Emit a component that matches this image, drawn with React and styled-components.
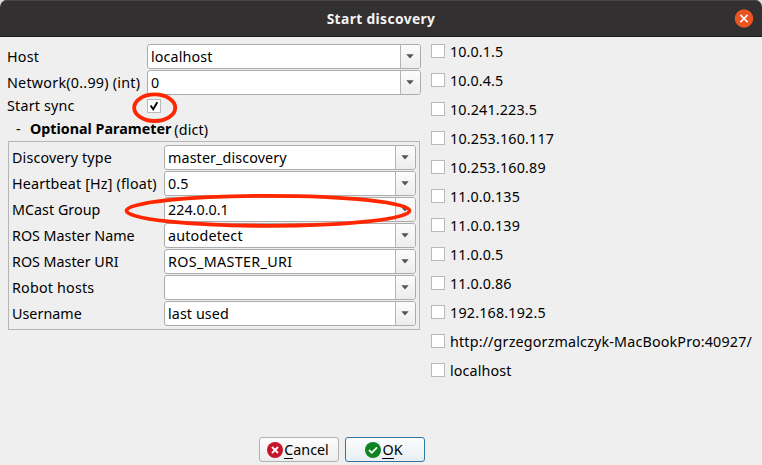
import React from "react";
import styled, { createGlobalStyle } from "styled-components";

const GlobalStyle = createGlobalStyle`
  *, *::before, *::after { box-sizing: border-box; }
  html, body { margin: 0; background: #dcdcdc; }
  body { overflow: hidden; }
`;

const Window = styled.div`
  position: relative;
  display: flex;
  flex-direction: column;
  width: 762px;
  height: 465px;
  overflow: hidden;
  border-radius: 7px 7px 0 0;
  background: #efefef;
  color: #000;
  font: 14.3px/20px "Noto Sans", sans-serif;
  white-space: nowrap;
`;

const TitleBar = styled.header`
  display: grid;
  grid-template-columns: 36px 1fr 36px;
  align-items: center;
  justify-items: center;
  flex: none;
  height: 37px;
  background: #323030;
  border-top: 1px solid #484646;
  border-bottom: 1px solid #1d1c1c;
`;

const Title = styled.h1`
  grid-column: 2;
  margin: 1px 0 0;
  color: #f5f4f2;
  font-size: 13.8px;
  font-weight: 700;
  letter-spacing: 0.38px;
`;

const CloseButton = styled.button`
  display: block;
  width: 20px;
  height: 20px;
  padding: 0;
  border: 0;
  background: none;
  svg { display: block; }
`;

const Body = styled.main`
  display: grid;
  grid-template-columns: 413px 1fr;
  column-gap: 10px;
  flex: 1;
  padding: 7px 0 0 8px;
`;

const Form = styled.section`
  display: flex;
  flex-direction: column;
`;

const Row = styled.div`
  display: grid;
  grid-template-columns: ${(p) => p.$label}px 1fr;
  align-items: center;
  height: ${(p) => p.$height || 25}px;
  margin-bottom: ${(p) => (p.$height ? 0 : 1)}px;
`;

const Text = styled.span`
  letter-spacing: ${(p) => p.$track || 0}px;
  font-weight: ${(p) => (p.$bold ? 700 : 400)};
`;

const Label = styled(Text)`
  margin-left: -1px;
`;

const Combo = styled.div`
  display: grid;
  grid-template-columns: 1fr 20px;
  height: 25px;
  border: 1px solid #acacac;
  border-radius: 3px;
  background: #fff;
  overflow: hidden;
`;

const Value = styled(Text)`
  padding-left: 3px;
  line-height: 24px;
`;

const Arrow = styled.span`
  display: grid;
  place-items: center;
  padding: 0 2px 1px 0;
  border-left: 1px solid #b4b4b4;
  background: linear-gradient(#fcfcfc, #ececec);
`;

const Box = styled.span`
  display: block;
  width: 14px;
  height: 14px;
  border: 1px solid #b9b9b9;
  background: #fff;
  svg { display: block; }
`;

const GroupTitle = styled.div`
  display: flex;
  align-items: center;
  height: 25px;
  padding-left: 8px;
`;

const Dash = styled.span`
  width: 14px;
`;

const TypeHint = styled(Text)`
  padding: 2px 0 0 3px;
`;

const Group = styled.div`
  height: 189px;
  width: 412px;
  padding: 3px;
  border: 1px solid #b5b5b5;
  ${Label} { margin-left: 0; }
`;

const HostList = styled.ul`
  margin: 0;
  padding: 0;
  list-style: none;
`;

const HostItem = styled.li`
  display: flex;
  gap: 5px;
  height: 29px;
  ${Text} { margin-top: -2px; }
`;

const Footer = styled.footer`
  display: flex;
  gap: 6px;
  height: 28px;
  padding-left: 259px;
`;

const PushButton = styled.button`
  display: flex;
  align-items: center;
  justify-content: center;
  gap: 1px;
  width: 80px;
  height: 25px;
  padding: 0 2px 0 0;
  border: 1px solid ${(p) => (p.$primary ? "#2f75a5" : "#b1b1b1")};
  border-radius: 3px;
  background: ${(p) => (p.$primary ? "linear-gradient(#fbfdfe, #e8eef2)" : "linear-gradient(#fdfdfd, #ededed)")};
  color: #000;
  font: inherit;
  u { text-decoration: none; display: inline-block; height: 19px; border-bottom: 1px solid #000; }
`;

const Highlights = styled.svg`
  position: absolute;
  inset: 0;
  pointer-events: none;
`;

const Caret = () => (
  <svg width="8" height="5" viewBox="0 0 8 5"><path d="M.3.3h7.4L4 4.5Z" fill="#555" /></svg>
);

const Field = ({ label, value, width, lt, vt }) => (
  <Row $label={width}>
    <Label $track={lt}>{label}</Label>
    <Combo>
      <Value $track={vt}>{value}</Value>
      <Arrow><Caret /></Arrow>
    </Combo>
  </Row>
);

const options = [
  ["Discovery type", "master_discovery", 0.15, 0.12],
  ["Heartbeat [Hz] (float)", "0.5", 0.17, 0.1],
  ["MCast Group", "224.0.0.1", 0.03, 0.03],
  ["ROS Master Name", "autodetect", 0, 0.2],
  ["ROS Master URI", "ROS_MASTER_URI", 0, 0.36],
  ["Robot hosts", "", 0.2, 0],
  ["Username", "last used", 0.03, 0.1],
];

const hosts = [
  ["10.0.1.5", 0.12],
  ["10.0.4.5", 0.12],
  ["10.241.223.5", 0.17],
  ["10.253.160.117", 0.2],
  ["10.253.160.89", 0.2],
  ["11.0.0.135", 0.12],
  ["11.0.0.139", 0.12],
  ["11.0.0.5", 0.12],
  ["11.0.0.86", 0.12],
  ["192.168.192.5", 0.2],
  ["http://grzegorzmalczyk-MacBookPro:40927/", 0.17],
  ["localhost", 0.12],
];

export default function App() {
  return (
    <>
      <GlobalStyle />
      <Window>
        <TitleBar>
          <Title>Start discovery</Title>
          <CloseButton aria-label="Close">
            <svg width="20" height="20" viewBox="0 0 20 20">
              <circle cx="10" cy="9.5" r="9.3" fill="#e95420" />
              <path d="m6.4 5.9 7.2 7.2m0-7.2-7.2 7.2" stroke="#fff" strokeWidth="1.5" />
            </svg>
          </CloseButton>
        </TitleBar>
        <Body>
          <Form>
            <Field width={139} label="Host" value="localhost" lt={0.2} vt={0.12} />
            <Field width={139} label="Network(0..99) (int)" value="0" lt={0.25} />
            <Row $label={139} $height={20}>
              <Label $track={0.2}>Start sync</Label>
              <Box>
                <svg width="12" height="12" viewBox="0 0 12 12">
                  <path d="m2.6 5.5 2.6 3.8L9.3 2.2" fill="none" stroke="#000" strokeWidth="1.9" />
                </svg>
              </Box>
            </Row>
            <GroupTitle>
              <Dash>-</Dash>
              <Text $bold>Optional Parameter</Text>
              <TypeHint $track={0.15}>(dict)</TypeHint>
            </GroupTitle>
            <Group>
              {options.map(([label, value, lt, vt]) => (
                <Field key={label} width={152} label={label} value={value} lt={lt} vt={vt} />
              ))}
            </Group>
          </Form>
          <HostList>
            {hosts.map(([name, track]) => (
              <HostItem key={name}><Box /><Text $track={track}>{name}</Text></HostItem>
            ))}
          </HostList>
        </Body>
        <Footer>
          <PushButton>
            <svg width="16" height="16" viewBox="0 0 16 16">
              <circle cx="8" cy="8" r="8" fill="#c7162b" />
              <path d="m5 5 6 6m0-6-6 6" stroke="#fff" strokeWidth="1.8" />
            </svg>
            <Text><u>C</u>ancel</Text>
          </PushButton>
          <PushButton $primary>
            <svg width="16" height="16" viewBox="0 0 16 16">
              <circle cx="8" cy="8" r="8" fill="#0e8420" />
              <path d="m4 8 2.8 2.8L12 5.4" fill="none" stroke="#fff" strokeWidth="1.8" />
            </svg>
            <Text><u>O</u>K</Text>
          </PushButton>
        </Footer>
        <Highlights width="762" height="465" viewBox="0 0 762 465" fill="none" stroke="#ff2600" strokeWidth="3.8">
          <ellipse cx="154.7" cy="107.7" rx="20.5" ry="13.3" />
          <ellipse cx="268" cy="210.8" rx="141.5" ry="15" />
        </Highlights>
      </Window>
    </>
  );
}
